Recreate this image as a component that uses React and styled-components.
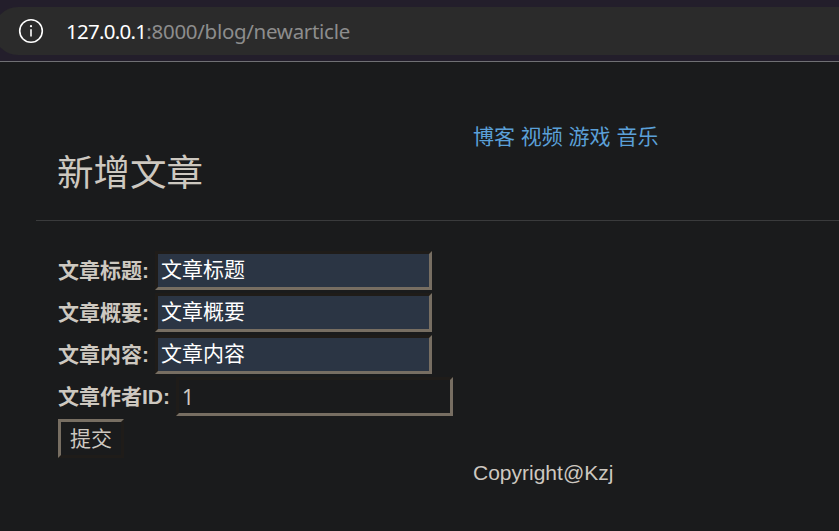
import React from "react";
import styled, { createGlobalStyle } from "styled-components";

const GlobalStyle = createGlobalStyle`
  * { box-sizing: border-box; }
  body {
    margin: 0;
    background: #1a1b1c;
    color: #cdc8c0;
    font-family: "Liberation Sans", "Noto Sans CJK SC", sans-serif;
    font-size: 21px;
    overflow: hidden;
  }
`;

const Window = styled.div`
  display: flex;
  flex-direction: column;
  height: 531px;
  overflow: hidden;
`;

const BrowserBar = styled.div`
  flex: none;
  height: 62px;
  padding-top: 7px;
  background: #231e2b;
  border-bottom: 1px solid #707074;
`;

const AddressField = styled.div`
  display: flex;
  align-items: center;
  height: 48px;
  margin-left: -6px;
  padding-left: 24px;
  border-radius: 24px 0 0 24px;
  background: #2b2b2b;
`;

const InfoIcon = styled.svg`
  flex: none;
  width: 26px;
  height: 26px;
  margin-right: 22px;
`;

const Address = styled.div`
  font-family: "Noto Sans", sans-serif;
  font-size: 20.5px;
  line-height: 28px;
  letter-spacing: -0.3px;
  white-space: nowrap;
  color: #8d8d8d;
`;

const Host = styled.span`
  color: #fff;
  letter-spacing: -0.72px;
`;

const PageHeader = styled.header`
  display: grid;
  grid-template-columns: 437px 1fr;
  flex: none;
  height: 159px;
  margin-left: 36px;
  border-bottom: 1px solid #3a3b3c;
`;

const Title = styled.h1`
  margin: 85px 0 0 21px;
  font-size: 36.5px;
  font-weight: 400;
  line-height: 54px;
`;

const Nav = styled.nav`
  display: flex;
  gap: 5.8px;
  margin-top: 60px;
  line-height: 30px;
`;

const NavLink = styled.a`
  color: #5ba0d8;
  text-decoration: none;
`;

const Form = styled.form`
  display: flex;
  flex-direction: column;
  align-items: flex-start;
  gap: 3px;
  padding: 30px 0 0 58px;
`;

const Field = styled.label`
  display: flex;
  align-items: center;
  gap: 6px;
  height: 39px;
  font-weight: 700;
  white-space: nowrap;
`;

const Caption = styled.span`
  width: ${(p) => p.$width}px;
  padding-bottom: 4px;
`;

const Input = styled.input`
  width: 277px;
  height: 39px;
  padding: 0 3px ${(p) => (p.$filled ? 5 : 0)}px;
  border: 3px solid;
  border-color: #1f1c19 #776e62 #776e62 #1f1c19;
  border-radius: 0;
  outline: none;
  background: ${(p) => (p.$filled ? "#2b3544" : "#1a1b1c")};
  color: ${(p) => (p.$filled ? "#fff" : "#cdc8c0")};
  font: 21px "Noto Sans", "Noto Sans CJK SC", sans-serif;
`;

const SubmitButton = styled.button`
  width: 66px;
  height: 39px;
  padding: 0 0 3px;
  border: 3px solid;
  border-color: #776e62 #1f1c19 #1f1c19 #776e62;
  border-radius: 0;
  background: #1a1b1c;
  color: #cdc8c0;
  font: 21px "Noto Sans CJK SC", sans-serif;
`;

const Footer = styled.footer`
  margin-left: 473px;
  line-height: 30px;
`;

const links = ["博客", "视频", "游戏", "音乐"];

const fields = [
  { caption: "文章标题:", value: "文章标题", width: 91, filled: true },
  { caption: "文章概要:", value: "文章概要", width: 91, filled: true },
  { caption: "文章内容:", value: "文章内容", width: 91, filled: true },
  { caption: "文章作者ID:", value: "1", width: 112, filled: false },
];

export default function App() {
  return (
    <>
      <GlobalStyle />
      <Window>
        <BrowserBar>
          <AddressField>
            <InfoIcon viewBox="0 0 26 26" fill="none" stroke="#fff">
              <circle cx="13" cy="13" r="11.3" strokeWidth="1.6" />
              <path d="M13 11.3v7.2" strokeWidth="1.6" />
              <circle cx="13" cy="8.2" r="1.1" fill="#fff" stroke="none" />
            </InfoIcon>
            <Address>
              <Host>127.0.0.1</Host>:8000/blog/newarticle
            </Address>
          </AddressField>
        </BrowserBar>
        <PageHeader>
          <Title>新增文章</Title>
          <Nav>
            {links.map((name) => (
              <NavLink key={name} href="#">{name}</NavLink>
            ))}
          </Nav>
        </PageHeader>
        <Form onSubmit={(e) => e.preventDefault()}>
          {fields.map((f) => (
            <Field key={f.caption}>
              <Caption $width={f.width}>{f.caption}</Caption>
              <Input $filled={f.filled} defaultValue={f.value} />
            </Field>
          ))}
          <SubmitButton type="submit">提交</SubmitButton>
        </Form>
        <Footer>Copyright@Kzj</Footer>
      </Window>
    </>
  );
}
